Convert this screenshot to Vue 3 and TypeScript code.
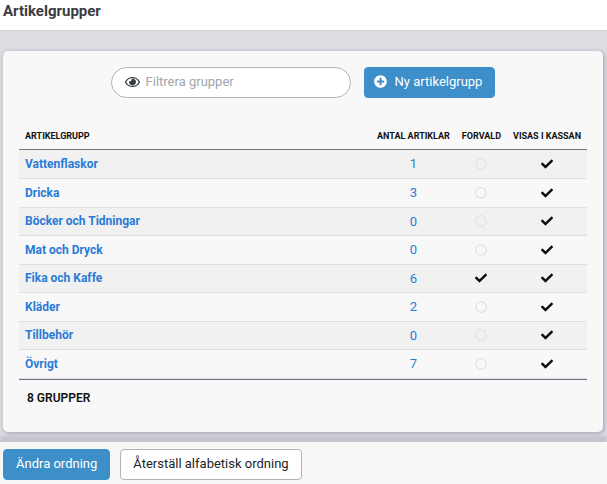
<script setup lang="ts">
import { computed, ref } from 'vue'

interface ArticleGroup {
  name: string
  count: number
  preset: boolean
  visible: boolean
}

const groups = ref<ArticleGroup[]>([
  { name: 'Vattenflaskor', count: 1, preset: false, visible: true },
  { name: 'Dricka', count: 3, preset: false, visible: true },
  { name: 'Böcker och Tidningar', count: 0, preset: false, visible: true },
  { name: 'Mat och Dryck', count: 0, preset: false, visible: true },
  { name: 'Fika och Kaffe', count: 6, preset: true, visible: true },
  { name: 'Kläder', count: 2, preset: false, visible: true },
  { name: 'Tillbehör', count: 0, preset: false, visible: true },
  { name: 'Övrigt', count: 7, preset: false, visible: true },
])

const filter = ref('')
const shown = computed(() =>
  groups.value.filter((g) => g.name.toLowerCase().includes(filter.value.toLowerCase())),
)

function sortAlphabetically(): void {
  groups.value.sort((a, b) => a.name.localeCompare(b.name, 'sv'))
}
</script>

<template>
  <div class="page">
    <header class="top">
      <h1>Artikelgrupper</h1>
    </header>

    <main class="content">
      <section class="card">
        <div class="tools">
          <label class="search">
            <svg class="eye" viewBox="0 0 576 512" aria-hidden="true">
              <path
                d="M288 124a132 132 0 0 0-48 9 58 58 0 0 1 14 38 56 56 0 0 1-56 56 58 58 0 0 1-34-12A132 132 0 1 0 288 124zm284.520 117.400C518.290 135.590 410.930 64 288 64S57.680 135.640 3.480 241.410a32.350 32.350 0 0 0 0 29.190C57.710 376.410 165.070 448 288 448s230.320-71.640 284.520-177.410a32.350 32.350 0 0 0 0-29.190zM288 408c-98.650 0-189.090-60-237.930-152C98.910 164 189.340 104 288 104s189.090 60 237.930 152C477.100 348 386.660 408 288 408z"
              />
            </svg>
            <input v-model="filter" type="text" placeholder="Filtrera grupper" aria-label="Filtrera grupper" />
          </label>
          <button type="button" class="btn primary">
            <svg class="plus" viewBox="0 0 512 512" aria-hidden="true">
              <path
                d="M256 8C119 8 8 119 8 256s111 248 248 248 248-111 248-248S393 8 256 8zm144 276c0 6.600-5.400 12-12 12h-92v92c0 6.600-5.400 12-12 12h-56c-6.600 0-12-5.400-12-12v-92h-92c-6.600 0-12-5.400-12-12v-56c0-6.600 5.400-12 12-12h92v-92c0-6.600 5.400-12 12-12h56c6.600 0 12 5.400 12 12v92h92c6.600 0 12 5.400 12 12v56z"
              />
            </svg>
            Ny artikelgrupp
          </button>
        </div>

        <table>
          <thead>
            <tr>
              <th scope="col" class="name">Artikelgrupp</th>
              <th scope="col">Antal artiklar</th>
              <th scope="col">Forvald</th>
              <th scope="col">Visas i kassan</th>
            </tr>
          </thead>
          <tbody>
            <tr v-for="g in shown" :key="g.name">
              <td class="name"><a href="#">{{ g.name }}</a></td>
              <td class="count"><a href="#">{{ g.count }}</a></td>
              <td v-for="(on, i) in [g.preset, g.visible]" :key="i">
                <svg v-if="on" class="mark" viewBox="0 0 512 512" aria-hidden="true">
                  <path
                    d="M173.900 439.400l-166.400-166.400c-10-10-10-26.200 0-36.200l36.200-36.200c10-10 26.200-10 36.200 0L192 312.690 432.100 72.600c10-10 26.200-10 36.200 0l36.200 36.200c10 10 10 26.200 0 36.200l-294.400 294.400c-10 10-26.200 10-36.200 0z"
                  />
                </svg>
                <svg v-else class="mark off" viewBox="0 0 12 12" aria-hidden="true">
                  <circle cx="6" cy="6" r="5.300" />
                </svg>
              </td>
            </tr>
          </tbody>
          <tfoot>
            <tr>
              <td colspan="4">{{ shown.length }} grupper</td>
            </tr>
          </tfoot>
        </table>
      </section>
    </main>

    <footer class="actions">
      <button type="button" class="btn primary">Ändra ordning</button>
      <button type="button" class="btn" @click="sortAlphabetically">Återställ alfabetisk ordning</button>
    </footer>
  </div>
</template>

<style>
body {
  background: #f7f7f7;
}
</style>

<style scoped>
.page {
  font-family: Roboto, 'Liberation Sans', sans-serif;
  font-size: 12px;
  color: #212529;
  min-height: 100vh;
  display: flex;
  flex-direction: column;
}
.top {
  background: #fff;
  border-bottom: 1px solid #ced1d8;
  padding: 1px 3px 9px;
}
h1 {
  margin: 0;
  font-size: 15px;
  line-height: 20px;
  font-weight: 700;
  color: #3c3c40;
}
.content {
  background: #dcdde2;
  padding: 20px 4px 10px 3px;
}
.card {
  background: #f8f8f8;
  border-radius: 5px;
  box-shadow: 1px 1px 4px rgba(60, 60, 85, 0.4);
  padding: 16px 16px 17px;
}
.tools {
  display: flex;
  justify-content: center;
  gap: 13px;
  margin-bottom: 24px;
}
.search {
  display: flex;
  align-items: center;
  gap: 6px;
  box-sizing: border-box;
  width: 240px;
  height: 31px;
  padding: 0 13px 2px;
  background: #fff;
  border: 1px solid #b3b3b3;
  border-radius: 16px;
}
.search input {
  flex: 1;
  min-width: 0;
  padding: 0;
  border: 0;
  outline: 0;
  background: none;
  font: inherit;
  font-size: 13px;
  color: #333;
}
.search input::placeholder {
  color: #9fa6ac;
  opacity: 1;
}
.eye {
  width: 15px;
  height: 14px;
  fill: #343a40;
}
.btn {
  display: inline-flex;
  align-items: center;
  justify-content: center;
  gap: 8px;
  box-sizing: border-box;
  height: 31px;
  padding: 0 12px 2px;
  border: 1px solid #b3b3b3;
  border-radius: 4px;
  background: #fff;
  color: #212529;
  font: inherit;
  font-size: 13px;
  white-space: nowrap;
  cursor: pointer;
}
.btn.primary {
  background: #3d8fc9;
  border-color: #3d8fc9;
  color: #fff;
}
.tools .btn {
  padding-left: 9px;
}
.plus {
  width: 13px;
  height: 13px;
  fill: #fff;
}
table {
  width: 100%;
  border-collapse: separate;
  border-spacing: 0;
}
th,
td {
  box-sizing: border-box;
  padding: 0 6px;
  text-align: center;
  vertical-align: middle;
}
th {
  height: 28px;
  border-bottom: 1px solid #707473;
  font-size: 9px;
  font-weight: 700;
  text-transform: uppercase;
  white-space: nowrap;
  color: #111;
}
.name {
  width: 100%;
  text-align: left;
}
tbody td {
  height: 29px;
  padding-bottom: 1px;
  border-bottom: 1px solid #dcdfe9;
  white-space: nowrap;
}
tbody tr:nth-child(odd):not(:first-child) td {
  height: 28px;
}
tbody tr:nth-child(odd) {
  background: #f1f1f1;
}
a {
  color: #2a7bd6;
  text-decoration: none;
}
.name a {
  font-weight: 700;
}
.count a {
  font-size: 13px;
}
.mark {
  display: block;
  width: 12px;
  height: 12px;
  margin: 0 auto;
  fill: #0b0b0b;
}
.mark.off {
  fill: none;
  stroke: #dde2ed;
  stroke-width: 1.2;
}
tfoot td {
  height: 36px;
  padding: 0 8px;
  border-top: 1px solid #707480;
  text-align: left;
  font-weight: 600;
  text-transform: uppercase;
  color: #111;
}
.actions {
  position: relative;
  display: flex;
  flex: 1;
  align-items: flex-start;
  gap: 10px;
  padding: 7px 3px 4px;
  background: #f7f7f7;
  box-shadow: 0 -6px 3px rgba(60, 60, 75, 0.14);
}
</style>
